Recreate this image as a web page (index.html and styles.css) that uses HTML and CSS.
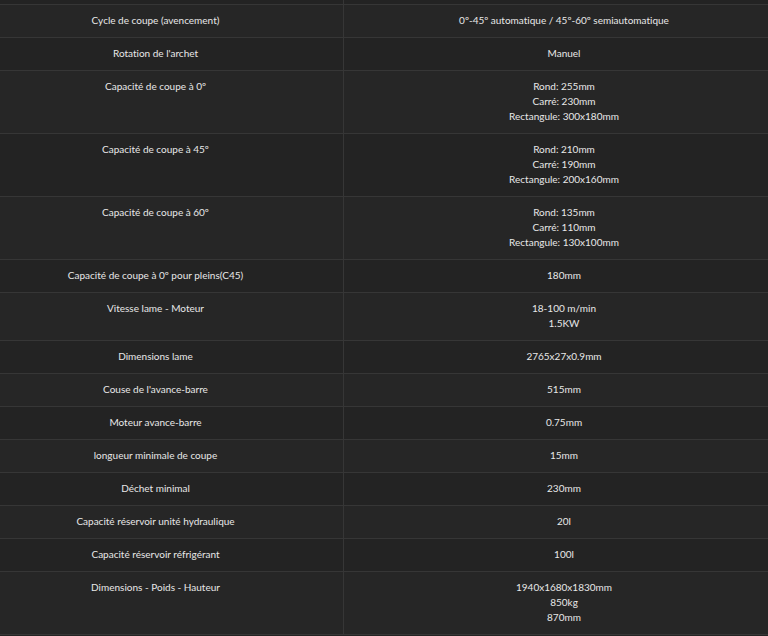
FILE: index.html
```html
<!DOCTYPE html>
<html lang="fr">
<head>
<meta charset="utf-8">
<title>Caractéristiques</title>
<link rel="stylesheet" href="styles.css">
</head>
<body>
<div class="specs">
  <div class="row stub"><div class="cell key"></div><div class="cell val"></div></div>
  <div class="row"><div class="cell key">Cycle de coupe (avencement)</div><div class="cell val">0º-45º automatique / 45º-60º semiautomatique</div></div>
  <div class="row"><div class="cell key">Rotation de l'archet</div><div class="cell val">Manuel</div></div>
  <div class="row"><div class="cell key">Capacité de coupe à 0º</div><div class="cell val">Rond: 255mm<br>Carré: 230mm<br>Rectangule: 300x180mm</div></div>
  <div class="row"><div class="cell key">Capacité de coupe à 45º</div><div class="cell val">Rond: 210mm<br>Carré: 190mm<br>Rectangule: 200x160mm</div></div>
  <div class="row"><div class="cell key">Capacité de coupe à 60º</div><div class="cell val">Rond: 135mm<br>Carré: 110mm<br>Rectangule: 130x100mm</div></div>
  <div class="row"><div class="cell key">Capacité de coupe à 0º pour pleins(C45)</div><div class="cell val">180mm</div></div>
  <div class="row"><div class="cell key">Vitesse lame - Moteur</div><div class="cell val">18-100 m/min<br>1.5KW</div></div>
  <div class="row"><div class="cell key">Dimensions lame</div><div class="cell val">2765x27x0.9mm</div></div>
  <div class="row"><div class="cell key">Couse de l'avance-barre</div><div class="cell val">515mm</div></div>
  <div class="row"><div class="cell key">Moteur avance-barre</div><div class="cell val">0.75mm</div></div>
  <div class="row"><div class="cell key">longueur minimale de coupe</div><div class="cell val">15mm</div></div>
  <div class="row"><div class="cell key">Déchet minimal</div><div class="cell val">230mm</div></div>
  <div class="row"><div class="cell key">Capacité réservoir unité hydraulique</div><div class="cell val">20l</div></div>
  <div class="row"><div class="cell key">Capacité réservoir réfrigérant</div><div class="cell val">100l</div></div>
  <div class="row"><div class="cell key">Dimensions - Poids - Hauteur</div><div class="cell val">1940x1680x1830mm<br>850kg<br>870mm</div></div>
</div>
</body>
</html>
```

FILE: styles.css
```css
html, body {
  margin: 0;
  padding: 0;
  background: #242424;
}
body {
  font-family: Lato, "Open Sans", sans-serif;
  font-size: 10px;
  line-height: 15px;
  color: #e8e8e8;
  font-variant-ligatures: none;
  overflow: hidden;
  height: 636px;
}
.specs {
  display: flex;
  flex-direction: column;
}
.row {
  display: grid;
  grid-template-columns: 344px 1fr;
  border-bottom: 1px solid #363636;
}
.row:nth-child(even) {
  background: #262626;
}
.row:nth-child(odd) {
  background: #232323;
}
.cell {
  padding: 8px 0 9px;
  text-align: center;
}
.key {
  padding-right: 32px;
  border-right: 1px solid #363636;
}
.val {
  padding-left: 16px;
}
.stub .cell {
  padding: 0;
  height: 4px;
}
```
